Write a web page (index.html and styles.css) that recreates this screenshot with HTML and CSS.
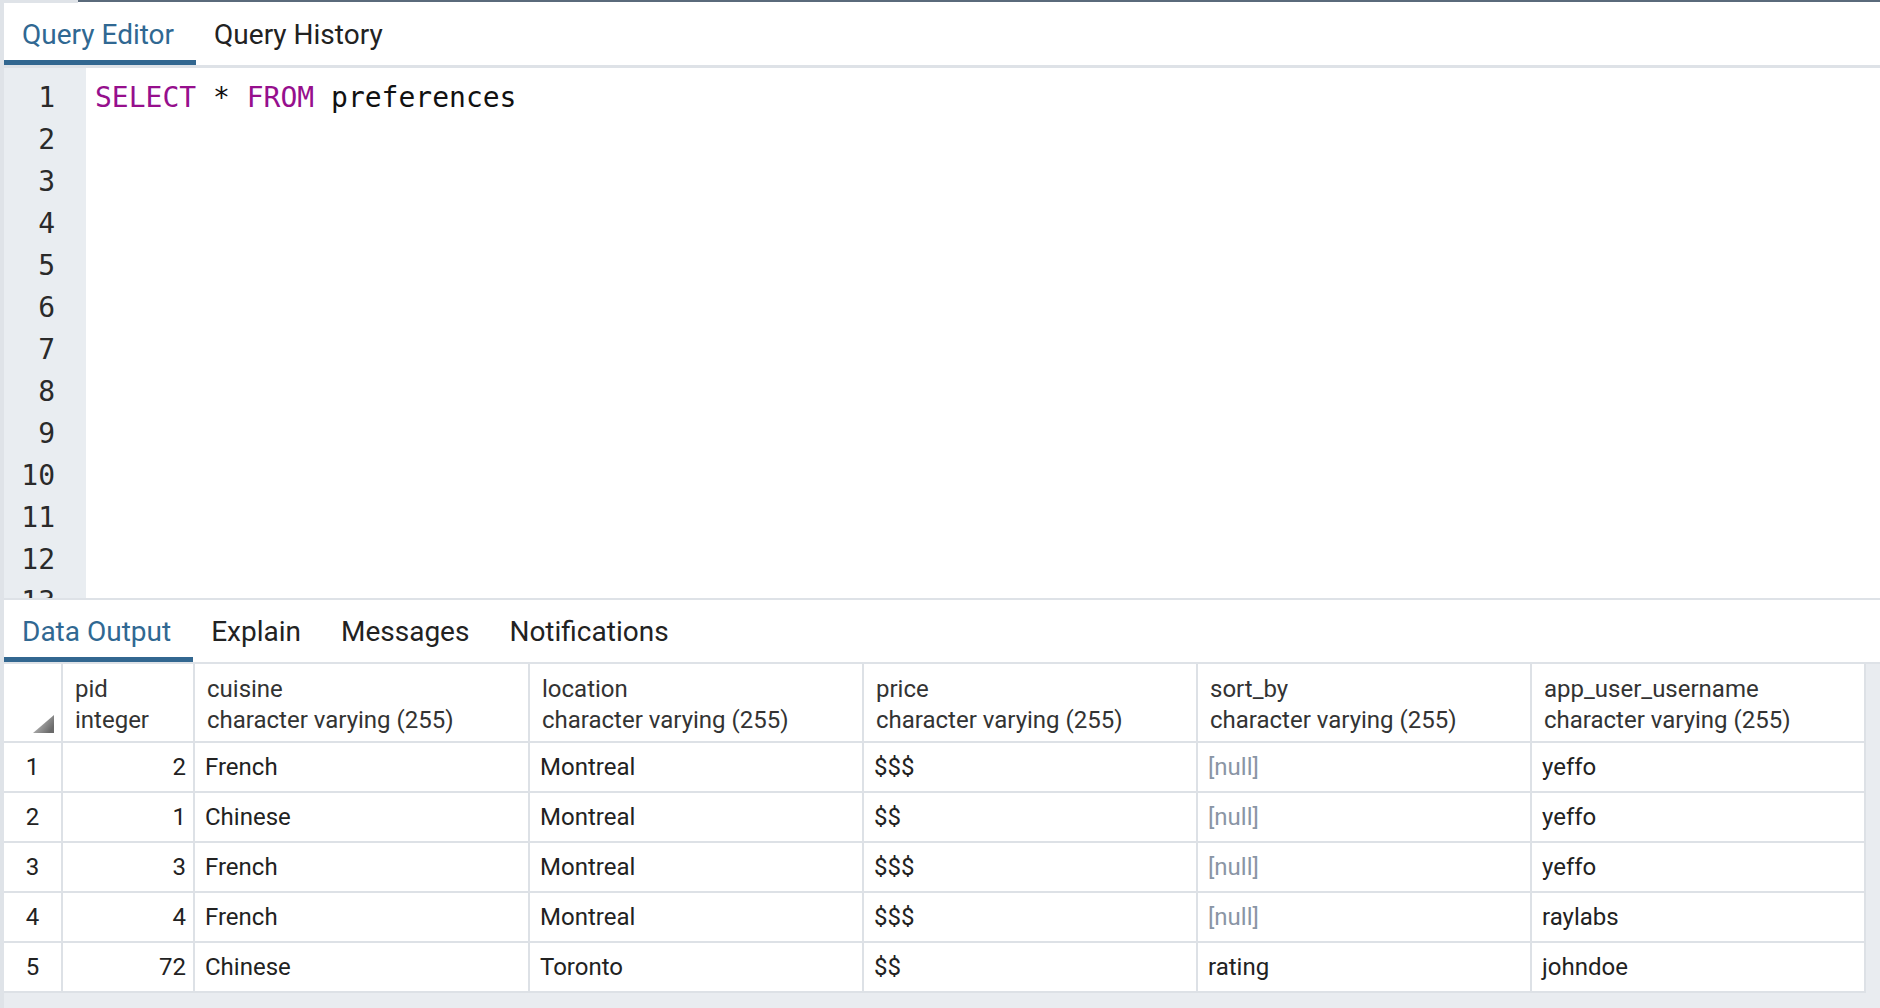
FILE: index.html
```html
<!DOCTYPE html>
<html lang="en">
<head>
<meta charset="utf-8">
<title>Query Tool</title>
<link rel="stylesheet" href="styles.css">
</head>
<body>
<div class="app">
  <div class="topbar"><div class="topbar-left"></div><div class="topbar-right"></div></div>
  <div class="tabs tabs-top">
    <div class="tab active">Query Editor</div>
    <div class="tab">Query History</div>
  </div>
  <div class="editor">
    <div class="gutter">
      <div>1</div><div>2</div><div>3</div><div>4</div><div>5</div><div>6</div><div>7</div>
      <div>8</div><div>9</div><div>10</div><div>11</div><div>12</div><div>13</div><div>14</div>
    </div>
    <div class="code">
      <div class="line"><span class="kw">SELECT</span> * <span class="kw">FROM</span> preferences</div>
    </div>
  </div>
  <div class="tabs tabs-output">
    <div class="tab active">Data Output</div>
    <div class="tab">Explain</div>
    <div class="tab">Messages</div>
    <div class="tab">Notifications</div>
  </div>
  <div class="output">
    <div class="grid">
      <div class="cell corner">
        <svg width="21" height="18" viewBox="0 0 21 18">
          <defs>
            <linearGradient id="tg" x1="0" y1="0" x2="1" y2="0.6">
              <stop offset="0" stop-color="#d6d6d6"/>
              <stop offset="1" stop-color="#6a6a6a"/>
            </linearGradient>
          </defs>
          <polygon points="21,0 21,18 0,18" fill="url(#tg)"/>
        </svg>
      </div>
      <div class="cell hcell"><div>pid</div><div>integer</div></div>
      <div class="cell hcell"><div>cuisine</div><div>character varying (255)</div></div>
      <div class="cell hcell"><div>location</div><div>character varying (255)</div></div>
      <div class="cell hcell"><div>price</div><div>character varying (255)</div></div>
      <div class="cell hcell"><div>sort_by</div><div>character varying (255)</div></div>
      <div class="cell hcell"><div>app_user_username</div><div>character varying (255)</div></div>

      <div class="cell rownum">1</div>
      <div class="cell num">2</div>
      <div class="cell">French</div>
      <div class="cell">Montreal</div>
      <div class="cell">$$$</div>
      <div class="cell null">[null]</div>
      <div class="cell">yeffo</div>

      <div class="cell rownum">2</div>
      <div class="cell num">1</div>
      <div class="cell">Chinese</div>
      <div class="cell">Montreal</div>
      <div class="cell">$$</div>
      <div class="cell null">[null]</div>
      <div class="cell">yeffo</div>

      <div class="cell rownum">3</div>
      <div class="cell num">3</div>
      <div class="cell">French</div>
      <div class="cell">Montreal</div>
      <div class="cell">$$$</div>
      <div class="cell null">[null]</div>
      <div class="cell">yeffo</div>

      <div class="cell rownum">4</div>
      <div class="cell num">4</div>
      <div class="cell">French</div>
      <div class="cell">Montreal</div>
      <div class="cell">$$$</div>
      <div class="cell null">[null]</div>
      <div class="cell">raylabs</div>

      <div class="cell rownum">5</div>
      <div class="cell num">72</div>
      <div class="cell">Chinese</div>
      <div class="cell">Toronto</div>
      <div class="cell">$$</div>
      <div class="cell">rating</div>
      <div class="cell">johndoe</div>
    </div>
  </div>
</div>
</body>
</html>
```

FILE: styles.css
```css
html, body {
  margin: 0;
  padding: 0;
  height: 100%;
}

body {
  background: #ffffff;
  font-family: Roboto, "Liberation Sans", sans-serif;
  overflow: hidden;
}

.app {
  height: 1008px;
  display: flex;
  flex-direction: column;
  border-left: 4px solid #dfe3e8;
  box-sizing: border-box;
}

.topbar {
  display: flex;
  align-items: flex-start;
  height: 3px;
  flex: none;
}

.topbar-left {
  width: 74px;
  height: 3px;
  background: #dfe3e8;
}

.topbar-right {
  flex: 1;
  height: 2px;
  background: #5a6a7b;
}

.tabs {
  display: flex;
  height: 62px;
  flex: none;
  background: #ffffff;
}

.tabs-top {
  border-bottom: 3px solid #dee2e7;
}

.tabs-output {
  border-top: 2px solid #dee2e7;
  border-bottom: 2px solid #dee2e7;
}

.tab {
  box-sizing: border-box;
  height: 62px;
  padding: 15px 22px 0 18px;
  font-size: 28px;
  line-height: 33px;
  color: #222222;
  border-bottom: 5px solid transparent;
  white-space: nowrap;
}

.tab.active {
  color: #306892;
  border-bottom-color: #326790;
}

.editor {
  display: flex;
  height: 530px;
  flex: none;
  overflow: hidden;
}

.gutter {
  width: 82px;
  flex: none;
  box-sizing: border-box;
  background: #e9edf1;
  padding: 9px 31px 0 0;
  text-align: right;
  font-family: "DejaVu Sans Mono", "Liberation Mono", monospace;
  font-size: 28px;
  line-height: 42px;
  color: #2a2a2a;
}

.code {
  flex: 1;
  padding: 9px 0 0 9px;
  font-family: "DejaVu Sans Mono", "Liberation Mono", monospace;
  font-size: 28px;
  line-height: 42px;
  color: #111111;
}

.line {
  white-space: pre;
}

.kw {
  color: #960f8d;
}

.output {
  flex: 1;
  background: #e9ecf0;
  overflow: hidden;
}

.grid {
  display: grid;
  grid-template-columns: 57px 130px 333px 332px 332px 332px 332px;
  grid-template-rows: 77px repeat(5, 48px);
  gap: 2px;
  background: #dde1e6;
  padding: 0 2px 2px 0;
  width: max-content;
}

.cell {
  background: #ffffff;
  font-size: 24px;
  line-height: 47px;
  color: #222222;
  padding: 1px 10px 0;
  white-space: nowrap;
  overflow: hidden;
}

.hcell {
  padding: 10px 12px 0;
  line-height: 31px;
  color: #333333;
}

.num {
  text-align: right;
  padding: 1px 7px 0 0;
}

.rownum {
  text-align: center;
  padding: 1px 0 0;
}

.null {
  color: #8a95a5;
}

.corner {
  display: flex;
  align-items: flex-end;
  justify-content: flex-end;
  padding: 0 7px 8px 0;
}
```
